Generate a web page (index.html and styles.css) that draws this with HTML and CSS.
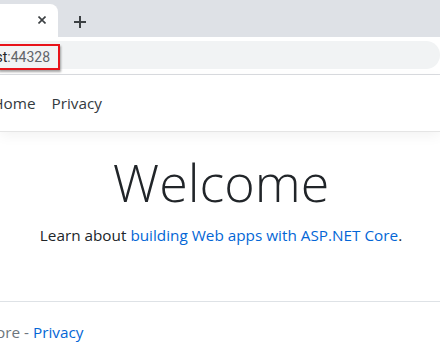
FILE: index.html
```html
<!DOCTYPE html>
<html lang="en">
<head>
    <meta charset="UTF-8">
    <title>Home Page - AspNetCore</title>
    <link rel="stylesheet" href="styles.css">
</head>
<body>

<div class="tabstrip">
    <div class="tab">
        <svg class="tab-close" width="8" height="8" viewBox="0 0 8 8">
            <path d="M0.5 0.5 L7.5 7.5 M7.5 0.5 L0.5 7.5" stroke="#3c4043" stroke-width="1.6" fill="none"/>
        </svg>
    </div>
    <svg class="tab-new" width="12" height="12" viewBox="0 0 12 12">
        <path d="M6 0 V12 M0 6 H12" stroke="#3c4043" stroke-width="2" fill="none"/>
    </svg>
</div>

<div class="toolbar">
    <div class="omnibox">
        <span class="url-mark"><span class="url-host">localhost</span><span class="url-port">:44328</span></span>
    </div>
</div>

<header class="navbar">
    <div class="nav-inner">
        <a class="brand">AspNetCore</a>
        <ul class="nav-links">
            <li><a href="#">Home</a></li>
            <li><a href="#">Privacy</a></li>
        </ul>
    </div>
</header>

<main class="main">
    <h1 class="display">Welcome</h1>
    <p>Learn about <a href="#">building Web apps with ASP.NET Core</a>.</p>
</main>

<footer class="footer">
    <div class="footer-inner">
        &copy; 2021 - AspNetCore - <a href="#">Privacy</a>
    </div>
</footer>

</body>
</html>
```

FILE: styles.css
```css
html, body {
    margin: 0;
    padding: 0;
}
body {
    width: 440px;
    height: 355px;
    overflow: hidden;
    background: #fff;
    font-family: "Open Sans", "Noto Sans", sans-serif;
    color: #212529;
}
a {
    text-decoration: none;
    color: #0366d6;
}
/* Browser chrome */
.tabstrip {
    height: 37px;
    background: #dee1e6;
    display: flex;
    align-items: flex-end;
}
.tab {
    width: 58px;
    height: 33px;
    background: #fff;
    border-radius: 0 8px 0 0;
    display: flex;
    align-items: center;
    justify-content: flex-end;
}
.tab-close {
    margin-right: 12px;
    margin-top: -1px;
}
.tab-new {
    margin-left: 16px;
    align-self: center;
    margin-top: 6px;
}
.toolbar {
    height: 38px;
    background: #fff;
    border-bottom: 1px solid #dadce0;
    padding-top: 4px;
    box-sizing: border-box;
}
.omnibox {
    height: 28px;
    background: #f1f3f4;
    border-radius: 0 14px 14px 0;
    display: flex;
    align-items: center;
}
.url-mark {
    display: inline-flex;
    align-items: center;
    height: 22px;
    width: 58px;
    margin-left: -2px;
    margin-top: 4px;
    border: 2px solid #e8131a;
    box-shadow: 1px 2px 2px rgba(0, 0, 0, 0.35);
    overflow: hidden;
    justify-content: flex-end;
    font-family: "Roboto", sans-serif;
    font-size: 14px;
    white-space: nowrap;
}
.url-host {
    color: #202124;
}
.url-port {
    color: #5f6368;
    margin-right: 8px;
}
/* Page */
.navbar {
    height: 56px;
    border-bottom: 1px solid #e5e5e5;
    box-shadow: 0 4px 12px rgba(0, 0, 0, 0.05);
    display: flex;
    align-items: center;
    margin-bottom: 16px;
}
.nav-inner {
    display: flex;
    align-items: center;
    margin-left: -138px;
}
.brand {
    color: #212529;
    font-size: 19px;
    margin-right: 16px;
}
.nav-links {
    display: flex;
    list-style: none;
    margin: 0;
    padding: 0;
}
.nav-links a {
    display: block;
    padding: 8px;
    color: #343a40;
    font-size: 15.3px;
}
.main {
    text-align: center;
    padding-bottom: 16px;
    margin-left: 2px;
}
.display {
    font-size: 52px;
    font-weight: 300;
    line-height: 67px;
    margin: 0 0 10px;
}
.main p {
    margin: 0 0 16px;
    font-size: 15.3px;
}
.footer {
    margin-top: 24px;
    border-top: 1px solid #dee2e6;
    line-height: 60px;
    color: #6c757d;
    font-size: 15.3px;
}
.footer-inner {
    white-space: nowrap;
    margin-left: -130px;
}
```
